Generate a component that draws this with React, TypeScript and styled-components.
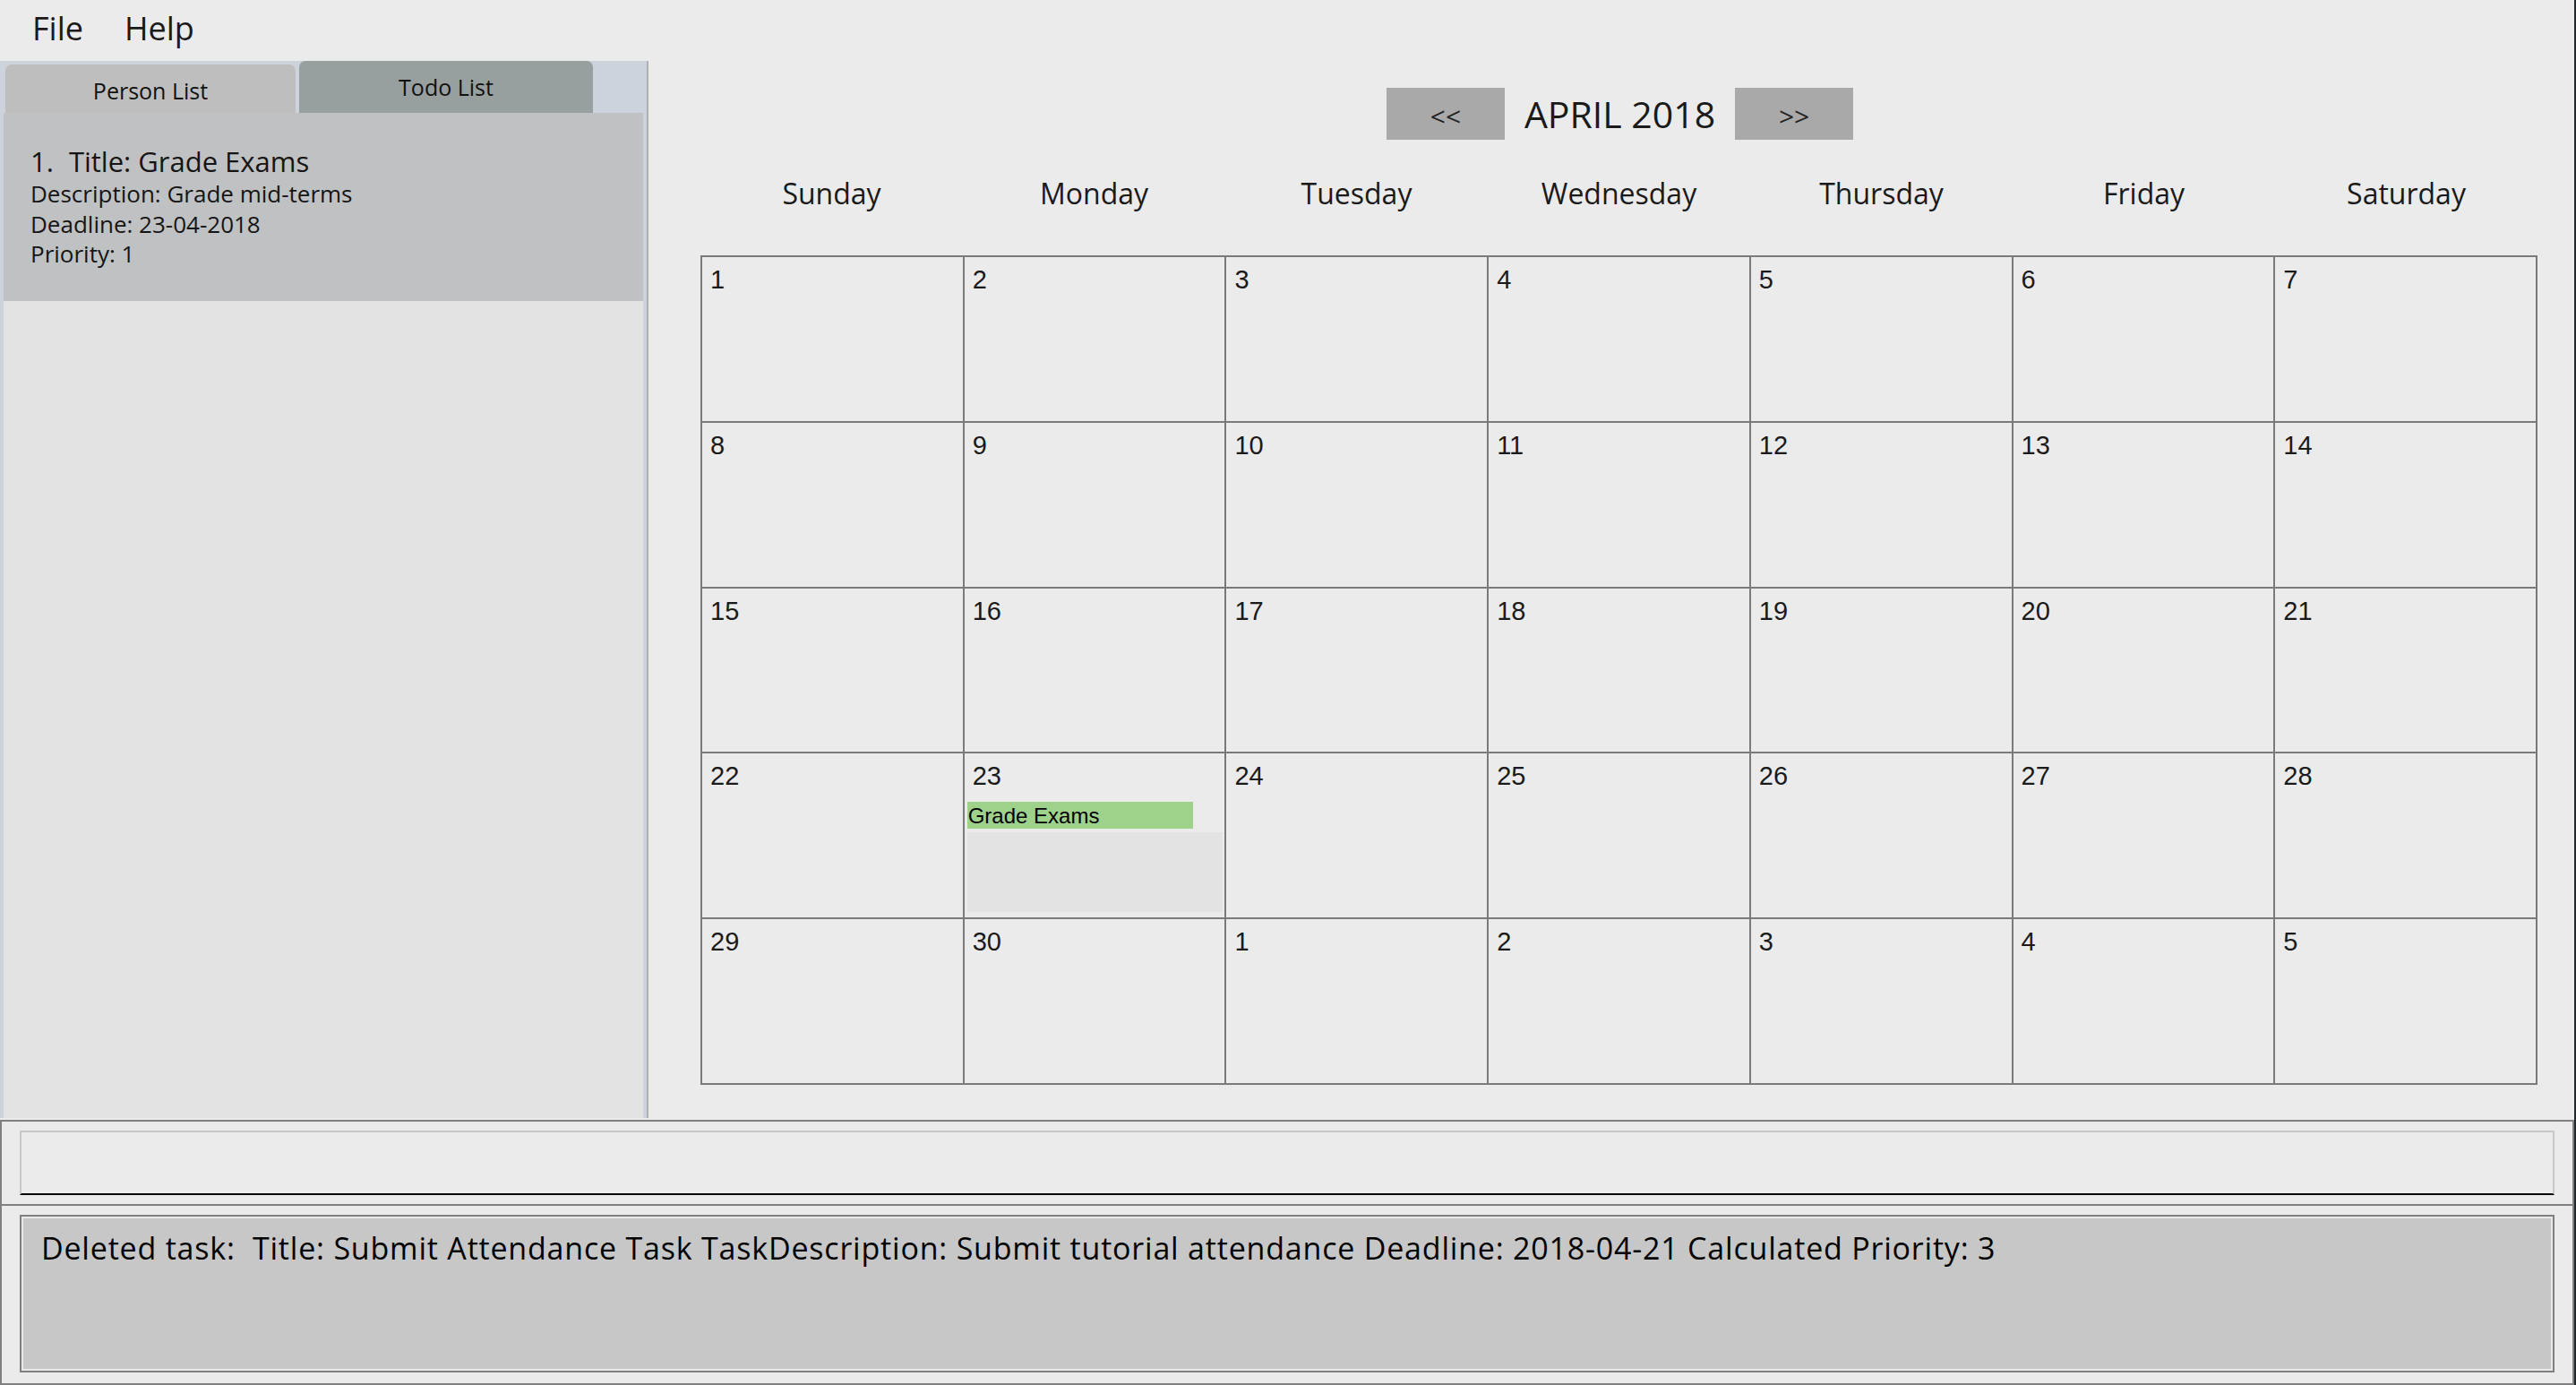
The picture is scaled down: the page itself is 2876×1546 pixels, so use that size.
import React from 'react'
import styled, { createGlobalStyle } from 'styled-components'

const GlobalStyle = createGlobalStyle`
  html, body {
    margin: 0;
    padding: 0;
    background: #1f292d;
  }
  body {
    font-family: 'Open Sans', 'Liberation Sans', sans-serif;
    color: #1c1c1c;
  }
`

const Window = styled.div`
  width: 2874px;
  height: 1546px;
  display: flex;
  flex-direction: column;
  background: #ebebeb;
  overflow: hidden;
`

const MenuBar = styled.div`
  height: 68px;
  flex: none;
  display: flex;
  align-items: flex-start;
  padding-left: 36px;
  gap: 46px;
`

const MenuItem = styled.span`
  font-size: 36px;
  line-height: 64px;
  color: #1a1a1a;
`

const Main = styled.div`
  height: 1182px;
  flex: none;
  display: flex;
`

const TabPane = styled.div`
  width: 714px;
  flex: none;
  display: flex;
  flex-direction: column;
  background: #cdd3dc;
  padding: 0 4px;
  border-right: 2px solid #b0b0b0;
  margin-bottom: 2px;
`

const TabHeader = styled.div`
  height: 58px;
  flex: none;
  display: flex;
  align-items: flex-end;
  gap: 4px;
  padding-left: 2px;
`

const Tab = styled.div<{ selected?: boolean; w: number }>`
  width: ${p => p.w}px;
  height: ${p => (p.selected ? 58 : 54)}px;
  border-radius: 7px 7px 0 0;
  background: ${p => (p.selected ? '#979f9f' : '#bebebe')};
  display: flex;
  align-items: center;
  justify-content: center;
  font-size: 25px;
  color: #111;
  padding-top: ${p => (p.selected ? 0 : 4)}px;
  box-sizing: border-box;
`

const ListArea = styled.div`
  flex: 1;
  background: #e3e3e3;
`

const TodoCard = styled.div`
  height: 210px;
  box-sizing: border-box;
  background: #c0c1c2;
  padding: 34px 30px 0;
`

const CardTitle = styled.div`
  font-size: 31px;
  line-height: 40px;
  color: #151515;
`

const Index = styled.span`
  margin-right: 17px;
`

const CardLine = styled.div`
  font-size: 26px;
  line-height: 33.5px;
  color: #151515;
`

const CalendarPane = styled.div`
  flex: 1;
  display: flex;
  flex-direction: column;
  padding: 30px 39px 0 58px;
`

const MonthNav = styled.div`
  display: flex;
  justify-content: center;
  align-items: center;
  gap: 22px;
  height: 58px;
`

const NavButton = styled.div`
  width: 132px;
  height: 58px;
  background: #a9a9a9;
  display: flex;
  align-items: center;
  justify-content: center;
  font-size: 30px;
  color: #222;
  padding-top: 4px;
  box-sizing: border-box;
`

const MonthLabel = styled.div`
  font-size: 41px;
  line-height: 58px;
  color: #1a1a1a;
`

const DayNames = styled.div`
  margin-top: 30px;
  display: grid;
  grid-template-columns: repeat(7, 1fr);
  width: 2051px;
  height: 60px;
  margin-bottom: 39px;
`

const DayName = styled.div`
  text-align: center;
  font-size: 32px;
  line-height: 60px;
  color: #1a1a1a;
`

const MonthGrid = styled.div`
  display: grid;
  grid-template-columns: repeat(7, 1fr);
  grid-template-rows: repeat(5, 1fr);
  width: 2051px;
  height: 926px;
  flex: none;
  box-sizing: border-box;
  border-left: 2px solid #7a7a7a;
  border-top: 2px solid #7a7a7a;
`

const DayCell = styled.div`
  border-right: 2px solid #7a7a7a;
  border-bottom: 2px solid #7a7a7a;
  display: flex;
  flex-direction: column;
  padding: 9px 2px 6px 3px;
  min-width: 0;
  min-height: 0;
`

const DayNumber = styled.div`
  font-family: 'Liberation Sans', Arial, sans-serif;
  font-size: 29px;
  line-height: 33px;
  padding-left: 6px;
  color: #1a1a1a;
`

const EventList = styled.div`
  margin-top: 12px;
  flex: 1;
  background: #e3e3e3;
`

const EventRow = styled.div`
  height: 34px;
  background: #ebebeb;
`

const EventTag = styled.div`
  width: 252px;
  height: 30px;
  background: #9ed28b;
  font-family: 'Liberation Sans', Arial, sans-serif;
  font-size: 24px;
  line-height: 31px;
  color: #000;
  padding-left: 1px;
  box-sizing: border-box;
`

const CommandSection = styled.div`
  flex: none;
  border: 2px solid #808080;
  padding: 10px 20px;
`

const CommandBox = styled.div`
  height: 72px;
  box-sizing: border-box;
  border: 2px solid #c8c8c8;
  border-bottom-color: #000;
  background: #ebebeb;
`

const ResultSection = styled.div`
  flex: 1;
  border: 2px solid #808080;
  border-top: none;
  padding: 10px 20px;
`

const ResultBox = styled.div`
  height: 176px;
  box-sizing: border-box;
  border: 2px solid #808080;
  box-shadow: inset 0 0 0 2px #e8e8e8;
  background: #c7c7c7;
  padding: 14px 22px;
`

const ResultText = styled.div`
  font-size: 34px;
  line-height: 42px;
  letter-spacing: 0.8px;
  white-space: pre;
  color: #000;
`

const weekDays = ['Sunday', 'Monday', 'Tuesday', 'Wednesday', 'Thursday', 'Friday', 'Saturday']

const days: number[] = []
for (let d = 1; d <= 30; d++) days.push(d)
for (let d = 1; d <= 5; d++) days.push(d)

const events: { [key: number]: string } = { 22: 'Grade Exams' }

export default function App() {
  return (
    <Window>
      <GlobalStyle />
      <MenuBar>
        <MenuItem>File</MenuItem>
        <MenuItem>Help</MenuItem>
      </MenuBar>
      <Main>
        <TabPane>
          <TabHeader>
            <Tab w={324}>Person List</Tab>
            <Tab w={328} selected>Todo List</Tab>
          </TabHeader>
          <ListArea>
            <TodoCard>
              <CardTitle><Index>1.</Index>Title: Grade Exams</CardTitle>
              <CardLine>Description: Grade mid-terms</CardLine>
              <CardLine>Deadline: 23-04-2018</CardLine>
              <CardLine>Priority: 1</CardLine>
            </TodoCard>
          </ListArea>
        </TabPane>
        <CalendarPane>
          <MonthNav>
            <NavButton>&lt;&lt;</NavButton>
            <MonthLabel>APRIL 2018</MonthLabel>
            <NavButton>&gt;&gt;</NavButton>
          </MonthNav>
          <DayNames>
            {weekDays.map(d => <DayName key={d}>{d}</DayName>)}
          </DayNames>
          <MonthGrid>
            {days.map((d, i) => (
              <DayCell key={i}>
                <DayNumber>{d}</DayNumber>
                {events[i] && (
                  <EventList>
                    <EventRow>
                      <EventTag>{events[i]}</EventTag>
                    </EventRow>
                  </EventList>
                )}
              </DayCell>
            ))}
          </MonthGrid>
        </CalendarPane>
      </Main>
      <CommandSection>
        <CommandBox />
      </CommandSection>
      <ResultSection>
        <ResultBox>
          <ResultText>Deleted task:  Title: Submit Attendance Task TaskDescription: Submit tutorial attendance Deadline: 2018-04-21 Calculated Priority: 3</ResultText>
        </ResultBox>
      </ResultSection>
    </Window>
  )
}
